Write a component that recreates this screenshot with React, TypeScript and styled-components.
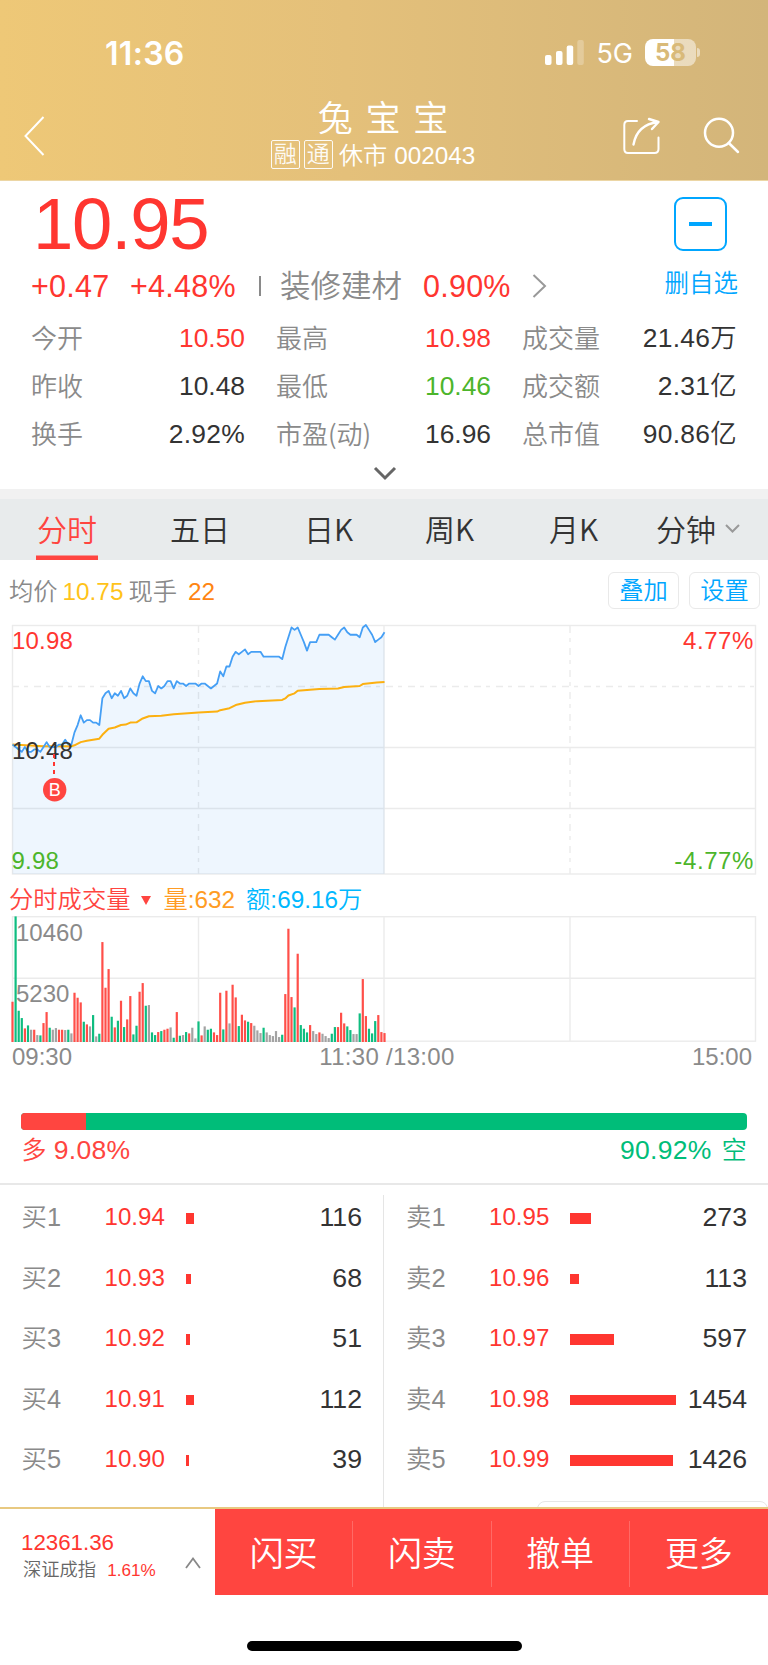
import React from "react";
import styled, { createGlobalStyle } from "styled-components";

const RED = "#ff3630";
const ACTION_RED = "#ff4540";
const GREEN = "#4cb52b";
const TEAL = "#00bd79";
const BLUE = "#00a6ff";
const GREY = "#8a8a8a";
const INK = "#333333";

const GlobalStyle = createGlobalStyle`
  * { box-sizing: border-box; }
  body {
    margin: 0;
    background: #fff;
    font-family: "Liberation Sans", "Noto Sans CJK SC", sans-serif;
    font-weight: 350;
    color: ${INK};
  }
`;

const Screen = styled.main`
  width: 768px;
  height: 1665px;
  display: flex;
  flex-direction: column;
  overflow: hidden;
  background: #fff;
`;

/* ---------- header ---------- */

const Header = styled.header`
  height: 181px;
  flex: none;
  background: linear-gradient(90deg, #eec877 0%, #e4c07a 45%, #d3b57a 100%);
  border-bottom: 1px solid #ecd6a5;
  color: #fff;
`;

const StatusBar = styled.div`
  height: 92px;
  padding: 13px 68px 0 105px;
  display: flex;
  align-items: center;
  font-family: Inter, sans-serif;
`;

const Clock = styled.span`
  margin-top: 1px;
  font-size: 32px;
  font-weight: 600;
  letter-spacing: 0.3px;
  flex: 1;
`;

const Network = styled.span`
  font-size: 27px;
  font-weight: 400;
  margin: 1px 12px 0 12px;
`;

const Battery = styled.span`
  width: 51px;
  height: 27px;
  border-radius: 8px;
  background: linear-gradient(90deg, #fff 57%, rgba(255, 255, 255, 0.5) 57%);
  color: #d9ba79;
  font-size: 24px;
  font-weight: 700;
  line-height: 28px;
  text-align: center;
`;

const BatteryNub = styled.span`
  width: 3px;
  height: 9px;
  margin-left: 1px;
  border-radius: 0 3px 3px 0;
  background: rgba(255, 255, 255, 0.5);
`;

const NavBar = styled.div`
  height: 88px;
  padding: 0 28px 0 24px;
  display: grid;
  grid-template-columns: 1fr 220px 1fr;
  align-items: center;
`;

const NavActions = styled.div`
  display: flex;
  justify-content: flex-end;
  gap: 43px;
`;

const TitleBlock = styled.div`
  display: flex;
  flex-direction: column;
  align-items: center;
  margin-left: 2px;
`;

const StockName = styled.h1`
  margin: 0 0 4px;
  font-size: 35px;
  font-weight: 350;
  line-height: 33px;
  word-spacing: 3px;
  white-space: nowrap;
`;

const StockMeta = styled.div`
  display: flex;
  align-items: center;
  gap: 4px;
  height: 31px;
  margin-right: 20px;
  font-size: 24.3px;
  line-height: 30px;
  white-space: nowrap;
`;

const Tag = styled.span`
  width: 29px;
  height: 29px;
  border: 1.4px solid #fff;
  border-radius: 2px;
  font-size: 23px;
  line-height: 27px;
  text-align: center;
  opacity: 0.92;
`;

const MetaText = styled.span`
  padding: 2px 0 0 2px;
`;

/* ---------- quote ---------- */

const Quote = styled.section`
  height: 308px;
  flex: none;
  padding: 0 30px 0 31px;
  display: flex;
  flex-direction: column;
`;

const PriceRow = styled.div`
  display: flex;
  justify-content: space-between;
  align-items: center;
  height: 88px;
  padding: 0 11px 0 2px;
`;

const Price = styled.span`
  margin-top: -2px;
  font-size: 72.5px;
  line-height: 88px;
  letter-spacing: -1.2px;
  color: ${RED};
`;

const RemoveButton = styled.button`
  width: 53px;
  height: 54px;
  margin-bottom: 2px;
  padding: 0;
  border: 2px solid ${BLUE};
  border-radius: 9px;
  background: none;
  display: grid;
  place-items: center;
  &::after {
    content: "";
    width: 23px;
    height: 4px;
    background: ${BLUE};
  }
`;

const ChangeRow = styled.div`
  display: flex;
  align-items: center;
  height: 34px;
  font-size: 30.5px;
  color: ${RED};
  white-space: nowrap;
`;

const Change = styled.span<{ $w: number }>`
  width: ${(p) => p.$w}px;
  letter-spacing: 0.25px;
`;

const Bar = styled.i`
  width: 2px;
  height: 20px;
  margin-right: 19px;
  background: ${GREY};
`;

const Sector = styled.span`
  width: 143px;
  margin-top: -4px;
  color: ${GREY};
`;

const RemoveLabel = styled.span`
  margin: -9px 0 0 auto;
  font-size: 24.5px;
  color: ${BLUE};
`;

const Stats = styled.dl`
  margin: 11px 0 0;
  display: grid;
  grid-template-columns: 214px 215px 215px;
  grid-auto-rows: 48px;
  column-gap: 31px;
  font-size: 26.4px;
  line-height: 48px;
`;

const Stat = styled.div`
  display: flex;
  justify-content: space-between;
  white-space: nowrap;
`;

const StatLabel = styled.dt`
  color: ${GREY};
  font-family: "Noto Sans CJK SC", sans-serif;
  font-size: 26px;
  line-height: 46px;
`;

const StatValue = styled.dd<{ $color?: string; $spaced: boolean }>`
  margin: 0;
  color: ${(p) => p.$color ?? INK};
  letter-spacing: ${(p) => (p.$spaced ? "0.3px" : "0")};
`;

const Expand = styled.div`
  display: flex;
  justify-content: center;
  padding-top: 7px;
`;

/* ---------- period tabs ---------- */

const Tabs = styled.nav`
  height: 71px;
  flex: none;
  border-top: 10px solid #f1f1f1;
  background: #e8ebec;
  padding-left: 36px;
  display: grid;
  grid-template-columns: 133px 134px 121px 124px 107px auto;
  justify-items: start;
  font-family: "Noto Sans CJK SC", sans-serif;
  font-size: 30px;
  line-height: 59px;
`;

const Tab = styled.span<{ $active?: boolean }>`
  height: 61px;
  padding: 0 1px 3px;
  display: flex;
  align-items: center;
  gap: 9px;
  color: ${(p) => (p.$active ? ACTION_RED : INK)};
  box-shadow: ${(p) => (p.$active ? `inset 0 -4.5px ${ACTION_RED}` : "none")};
`;

/* ---------- charts ---------- */

const Legend = styled.div`
  height: 60px;
  flex: none;
  padding: 0 8px 0 9px;
  display: flex;
  align-items: center;
  justify-content: space-between;
  font-size: 24.3px;
  color: ${GREY};
  white-space: nowrap;
`;

const LegendText = styled.span`
  margin-top: -1px;
`;

const Figure = styled.span<{ $color: string; $left?: number; $right?: number }>`
  color: ${(p) => p.$color};
  margin-left: ${(p) => p.$left ?? 0}px;
  margin-right: ${(p) => p.$right ?? 0}px;
`;

const SettingButtons = styled.div`
  display: flex;
  gap: 10px;
`;

const SettingButton = styled.button`
  width: 71px;
  height: 37px;
  padding: 0;
  border: 1.5px solid #e9e9e9;
  border-radius: 6px;
  background: #fff;
  font: inherit;
  line-height: 36px;
  color: ${BLUE};
`;

const ChartSvg = styled.svg`
  display: block;
  flex: none;
  font-family: "Liberation Sans", sans-serif;
  font-size: 24px;
`;

const VolumeLegend = styled.div`
  height: 36px;
  flex: none;
  padding: 11px 9px 0;
  display: flex;
  align-items: center;
  font-size: 24.3px;
  line-height: 25px;
  color: ${ACTION_RED};
  white-space: nowrap;
`;

const Triangle = styled.i`
  margin: 2px 12px 0 11px;
  border: 5px solid transparent;
  border-top: 9px solid ${ACTION_RED};
  border-bottom: 0;
`;

const TimeAxis = styled.div`
  height: 30px;
  flex: none;
  padding: 0 16px 0 12px;
  display: grid;
  grid-template-columns: 1fr auto 1fr;
  font-size: 24px;
  line-height: 30px;
  color: ${GREY};
  & > :nth-child(2) {
    margin-left: 10px;
    letter-spacing: 0.3px;
  }
  & > :last-child {
    text-align: right;
  }
`;

/* ---------- long / short ratio ---------- */

const Ratio = styled.section`
  height: 113px;
  flex: none;
  padding: 41px 21px 0 20.5px;
  border-bottom: 2px solid #e8e8e8;
`;

const RatioBar = styled.div`
  height: 17px;
  display: flex;
  border-radius: 4px;
  overflow: hidden;
  background: ${TEAL};
`;

const RatioLong = styled.i`
  background: ${ACTION_RED};
`;

const RatioText = styled.div`
  display: flex;
  justify-content: space-between;
  padding: 5px 0 0 1px;
  font-size: 26.5px;
  line-height: 30px;
  letter-spacing: 0.3px;
`;

const Side = styled.span<{ $color: string; $gap: number }>`
  color: ${(p) => p.$color};
  display: flex;
  gap: ${(p) => p.$gap}px;
`;

const SideName = styled.span`
  font-size: 25px;
`;

/* ---------- order book ---------- */

const Book = styled.section`
  height: 322px;
  flex: none;
  display: grid;
  grid-template-columns: 384px 384px;
  padding-top: 10px;
`;

const BookSide = styled.div<{ $sell?: boolean }>`
  padding: ${(p) => (p.$sell ? "0 21px 0 22px" : "0 21px 0 21.5px")};
  border-right: ${(p) => (p.$sell ? "none" : "1.5px solid #e5e5e5")};
`;

const Order = styled.div`
  height: 60.6px;
  display: grid;
  grid-template-columns: 83px 81px 1fr auto;
  align-items: start;
  font-size: 25.4px;
  line-height: 44px;
`;

const Level = styled.span`
  color: ${GREY};
`;

const OrderPrice = styled.span`
  font-size: 24.1px;
  color: ${RED};
`;

const Depth = styled.i`
  height: 10.5px;
  margin-top: 18px;
  background: ${RED};
`;

const OrderVolume = styled.span`
  font-size: 26.7px;
`;

const Popover = styled.div`
  position: absolute;
  left: 537px;
  top: 1501px;
  width: 231px;
  height: 16px;
  border: 1.5px solid #e6e6e6;
  border-radius: 8px;
`;

/* ---------- bottom bar ---------- */

const BottomBar = styled.footer`
  position: relative;
  height: 88px;
  flex: none;
  display: flex;
  background: #fff;
  border-top: 2px solid #e8c981;
`;

const IndexPanel = styled.div`
  width: 215px;
  padding: 21px 14px 0 21px;
  display: flex;
  justify-content: space-between;
`;

const IndexValue = styled.div`
  font-size: 22.3px;
  line-height: 26px;
  color: ${RED};
`;

const IndexName = styled.div`
  display: flex;
  align-items: baseline;
  gap: 11px;
  padding-left: 2px;
  font-size: 18.3px;
  line-height: 27px;
  color: #666;
  white-space: nowrap;
`;

const IndexChange = styled.span`
  font-size: 17.1px;
  color: ${RED};
`;

const Actions = styled.div`
  flex: 1;
  display: grid;
  grid-template-columns: repeat(4, 1fr);
  background: ${ACTION_RED};
`;

const Action = styled.button`
  margin: 12px 0 8px;
  padding: 0 0 6px;
  border: 0;
  border-right: 1px solid #ff6a66;
  background: none;
  color: #fff;
  font: inherit;
  font-size: 34px;
  &:last-child {
    border-right: 0;
  }
`;

const HomeIndicator = styled.div`
  width: 275px;
  height: 9.5px;
  margin: 46px auto 0;
  border-radius: 5px;
  background: #000;
`;

/* ---------- data ---------- */

const stats: [string, string, string?][] = [
  ["今开", "10.50", RED],
  ["最高", "10.98", RED],
  ["成交量", "21.46万"],
  ["昨收", "10.48"],
  ["最低", "10.46", GREEN],
  ["成交额", "2.31亿"],
  ["换手", "2.92%"],
  ["市盈(动)", "16.96"],
  ["总市值", "90.86亿"],
];

/* price per minute, in cents */
const prices = [
  1049, 1048, 1047, 1046, 1048, 1046, 1046, 1047, 1047, 1046, 1048, 1050, 1048, 1048, 1048, 1049, 1049, 1051,
  1049, 1049, 1054, 1057, 1061, 1058, 1059, 1059, 1058, 1058, 1057, 1068, 1070, 1071, 1068, 1070, 1069, 1071,
  1068, 1069, 1072, 1070, 1069, 1074, 1077, 1075, 1075, 1071, 1070, 1073, 1072, 1073, 1075, 1075, 1072, 1075,
  1074, 1074, 1073, 1074, 1074, 1074, 1073, 1074, 1074, 1073, 1072, 1073, 1074, 1079, 1077, 1081, 1081, 1085,
  1087, 1086, 1087, 1088, 1086, 1087, 1087, 1087, 1087, 1085, 1085, 1085, 1085, 1085, 1085, 1084, 1089, 1093,
  1097, 1096, 1097, 1094, 1091, 1087.5, 1091, 1091, 1091, 1094, 1094, 1094, 1094, 1093, 1092, 1094, 1096, 1097,
  1095, 1094, 1094, 1094, 1093, 1097, 1098, 1096, 1094, 1091, 1092, 1093, 1095,
];

/* [minute, average price in cents] */
const averages = [
  [0, 1049], [10, 1048.3], [19, 1048.3], [20, 1048.7], [22, 1050], [24, 1050.6], [28, 1051.4], [29, 1053],
  [31, 1055.5], [33, 1056], [35, 1057], [36.5, 1057.2], [38, 1058], [40, 1058.1], [42, 1059.7], [44, 1060.6],
  [48, 1060.8], [52, 1061.4], [60, 1062.1], [66, 1062.5], [67, 1063.1], [70, 1063.9], [72, 1065.2], [75, 1066.1],
  [79, 1066.8], [87, 1067.3], [88, 1067.9], [89, 1069.1], [91, 1070], [92, 1071.1], [99, 1071.8], [105, 1072],
  [107, 1072.6], [112, 1073], [113, 1073.8], [117.5, 1074.4], [120, 1074.6],
];

/* volume per minute: colour code, then bar height in thirds of a pixel */
const volumes =
  "r122 g378 g95 g73 r42 g51 k38 r38 k22 g21 r58 r91 g44 k38 k43 r38 r38 k37 g38 k27 r149 r134 r120 g62 r54 k48 g82 k18 g26 r301 r164 r220 g77 r45 g65 r125 g46 r69 r139 g24 g50 r152 r178 g110 k112 g30 g22 r31 g34 r38 r41 k45 g14 r91 g20 k22 g31 r27 k44 k12 g63 r21 k48 g38 g41 r30 r22 r149 g39 r155 k57 r173 r135 g49 r83 r66 g62 r58 k50 k36 k28 g44 k30 k22 k19 k34 k16 g23 r145 r341 r136 g105 r266 g52 g41 g30 r52 k34 k25 r30 k26 k19 k13 g26 g46 r46 r89 r57 g48 g37 k25 k25 g87 r190 r79 g41 g27 g64 r82 r31 r28"
    .split(" ")
    .map((v) => ({ color: v[0], h: Number(v.slice(1)) / 3 }));

const volumeColors: Record<string, string> = { r: "#ff4f49", g: "#0fbd80", k: "#a3a3a3" };

const buys = [
  ["买1", "10.94", 116, 8],
  ["买2", "10.93", 68, 5.5],
  ["买3", "10.92", 51, 4],
  ["买4", "10.91", 112, 8],
  ["买5", "10.90", 39, 3],
] as const;

const sells = [
  ["卖1", "10.95", 273, 21],
  ["卖2", "10.96", 113, 8.5],
  ["卖3", "10.97", 597, 44],
  ["卖4", "10.98", 1454, 105.5],
  ["卖5", "10.99", 1426, 103],
] as const;

const minuteX = (m: number) => 12.5 + m * 3.1;
const priceY = (cents: number) => 5 + (1098 - cents) * 2.44;
const GRID = "#ebebeb";

function PriceChart() {
  const line = prices.map((p, i) => `${minuteX(i)},${priceY(p)}`).join(" ");
  const avg = averages.map(([m, p]) => `${minuteX(m)},${priceY(p)}`).join(" ");
  return (
    <ChartSvg width="768" height="256" viewBox="0 0 768 256">
      <g fill="none" stroke={GRID} strokeWidth="1.4">
        <rect x="12.5" y="5.5" width="743" height="248.5" />
        <path d="M12 127.5H756M12 188.5H756M384 5V254" />
        <path d="M12 66.5H756M198.5 6V254M570 6V254" strokeDasharray="7 5 4 6" />
      </g>
      <polygon points={`12.5,254 ${line} 384.5,254`} fill="#459ff5" fillOpacity="0.09" />
      <polyline points={avg} fill="none" stroke="#fcb010" strokeWidth="2" strokeLinejoin="round" />
      <polyline points={line} fill="none" stroke="#459ff5" strokeWidth="1.8" strokeLinejoin="round" />
      <text x="12" y="29.3" fill={RED} letterSpacing="0.2">10.98</text>
      <text x="12" y="139" fill={INK} letterSpacing="0.2">10.48</text>
      <text x="11.5" y="249" fill={GREEN} letterSpacing="0.2">9.98</text>
      <text x="754" y="29.3" fill={RED} textAnchor="end" letterSpacing="0.6">4.77%</text>
      <text x="754" y="249" fill={GREEN} textAnchor="end" letterSpacing="0.6">-4.77%</text>
      <path d="M54 134V154" stroke={RED} strokeWidth="2" strokeDasharray="4 4" />
      <circle cx="54.7" cy="169.7" r="11.7" fill={ACTION_RED} />
      <text x="54.7" y="176.3" fill="#fff" fontSize="18" textAnchor="middle">B</text>
    </ChartSvg>
  );
}

function VolumeChart() {
  return (
    <ChartSvg width="768" height="130" viewBox="0 0 768 130">
      <g fill="none" stroke={GRID} strokeWidth="1.4">
        <rect x="12.5" y="4.7" width="743" height="124.5" />
        <path d="M12 66.3H756M198.5 5V129M384 5V129M570 5V129" />
      </g>
      <text x="16" y="28.6" fill={GREY}>10460</text>
      <text x="16" y="89.6" fill={GREY}>5230</text>
      {volumes.map((v, i) => (
        <rect key={i} x={minuteX(i) - 1.1} y={130.4 - v.h} width="2.2" height={v.h} fill={volumeColors[v.color]} />
      ))}
    </ChartSvg>
  );
}

function OrderRows({ rows }: { rows: readonly (readonly [string, string, number, number])[] }) {
  return (
    <>
      {rows.map(([level, price, volume, depth]) => (
        <Order key={level}>
          <Level>{level}</Level>
          <OrderPrice>{price}</OrderPrice>
          <Depth style={{ width: depth }} />
          <OrderVolume>{volume}</OrderVolume>
        </Order>
      ))}
    </>
  );
}

export default function App() {
  return (
    <Screen>
      <GlobalStyle />
      <Header>
        <StatusBar>
          <Clock>11:36</Clock>
          <svg width="39" height="26" viewBox="0 0 39 26" fill="#fff">
            <rect x="0" y="15" width="6.5" height="10" rx="2" />
            <rect x="11" y="11" width="6.5" height="14" rx="2" />
            <rect x="21.7" y="5.5" width="6.5" height="19.5" rx="2" />
            <rect x="32.3" y="0" width="6.5" height="25" rx="2" opacity="0.25" />
          </svg>
          <Network>5G</Network>
          <Battery>58</Battery>
          <BatteryNub />
        </StatusBar>
        <NavBar>
          <svg width="21" height="40" viewBox="0 0 21 40" fill="none" stroke="#fff" strokeWidth="2">
            <path d="M19.5 1L1.5 20l18 19" />
          </svg>
          <TitleBlock>
            <StockName>兔 宝 宝</StockName>
            <StockMeta>
              <Tag>融</Tag>
              <Tag>通</Tag>
              <MetaText>休市 002043</MetaText>
            </StockMeta>
          </TitleBlock>
          <NavActions>
            <svg
              width="38"
              height="38"
              viewBox="0 0 38 38"
              fill="none"
              stroke="#fff"
              strokeWidth="2"
              strokeLinecap="round"
              strokeLinejoin="round"
            >
              <path d="M15 4H6Q2.300 4 2.300 8V32Q2.300 36 6 36H32.500Q36.500 36 36.500 32V20.500" />
              <path d="M11.500 27.500C13.500 16 21 7 36 5M27 2L36.500 5L30 12" strokeWidth="2.4" />
            </svg>
            <svg
              width="37"
              height="38"
              viewBox="0 0 37 38"
              fill="none"
              stroke="#fff"
              strokeWidth="2.5"
              strokeLinecap="round"
            >
              <circle cx="16" cy="15.800" r="14" />
              <path d="M25.800 26L35 35" />
            </svg>
          </NavActions>
        </NavBar>
      </Header>

      <Quote>
        <PriceRow>
          <Price>10.95</Price>
          <RemoveButton />
        </PriceRow>
        <ChangeRow>
          <Change $w={99}>+0.47</Change>
          <Change $w={129}>+4.48%</Change>
          <Bar />
          <Sector>装修建材</Sector>
          <Change $w={109}>0.90%</Change>
          <svg width="15" height="24" viewBox="0 0 15 24" fill="none" stroke="#999" strokeWidth="2">
            <path d="M1.500 1L13 12L1.500 23" />
          </svg>
          <RemoveLabel>删自选</RemoveLabel>
        </ChangeRow>
        <Stats>
          {stats.map(([label, value, color]) => (
            <Stat key={label}>
              <StatLabel>{label}</StatLabel>
              <StatValue $color={color} $spaced={/[%万亿]/.test(value)}>
                {value}
              </StatValue>
            </Stat>
          ))}
        </Stats>
        <Expand>
          <svg width="24" height="16" viewBox="0 0 24 16" fill="none" stroke="#666" strokeWidth="3">
            <path d="M2 3L12 13L22 3" />
          </svg>
        </Expand>
      </Quote>

      <Tabs>
        <Tab $active>分时</Tab>
        <Tab>五日</Tab>
        <Tab>日K</Tab>
        <Tab>周K</Tab>
        <Tab>月K</Tab>
        <Tab>
          分钟
          <svg width="15" height="9" viewBox="0 0 15 9" fill="none" stroke="#999" strokeWidth="2">
            <path d="M1 1L7.500 7.500L14 1" />
          </svg>
        </Tab>
      </Tabs>

      <Legend>
        <LegendText>
          均价
          <Figure $color="#ffc31a" $left={5} $right={5}>10.75</Figure>
          现手
          <Figure $color="#ff8512" $left={11}>22</Figure>
        </LegendText>
        <SettingButtons>
          <SettingButton>叠加</SettingButton>
          <SettingButton>设置</SettingButton>
        </SettingButtons>
      </Legend>
      <PriceChart />

      <VolumeLegend>
        分时成交量
        <Triangle />
        <span>
          <Figure $color="#ff9c24">量:632</Figure>
          <Figure $color="#00b8ff" $left={11}>额:69.16万</Figure>
        </span>
      </VolumeLegend>
      <VolumeChart />
      <TimeAxis>
        <span>09:30</span>
        <span>11:30 /13:00</span>
        <span>15:00</span>
      </TimeAxis>

      <Ratio>
        <RatioBar>
          <RatioLong style={{ width: "9.08%" }} />
        </RatioBar>
        <RatioText>
          <Side $color={ACTION_RED} $gap={7}>
            <SideName>多</SideName>9.08%
          </Side>
          <Side $color={TEAL} $gap={10}>
            90.92%<SideName>空</SideName>
          </Side>
        </RatioText>
      </Ratio>

      <Book>
        <BookSide>
          <OrderRows rows={buys} />
        </BookSide>
        <BookSide $sell>
          <OrderRows rows={sells} />
        </BookSide>
      </Book>
      <Popover />

      <BottomBar>
        <IndexPanel>
          <div>
            <IndexValue>12361.36</IndexValue>
            <IndexName>
              深证成指<IndexChange>1.61%</IndexChange>
            </IndexName>
          </div>
          <svg width="16" height="50" viewBox="0 0 16 50" fill="none" stroke="#888" strokeWidth="1.800">
            <path d="M1 38L8 28.500L15 38" />
          </svg>
        </IndexPanel>
        <Actions>
          <Action>闪买</Action>
          <Action>闪卖</Action>
          <Action>撤单</Action>
          <Action>更多</Action>
        </Actions>
      </BottomBar>
      <HomeIndicator />
    </Screen>
  );
}
